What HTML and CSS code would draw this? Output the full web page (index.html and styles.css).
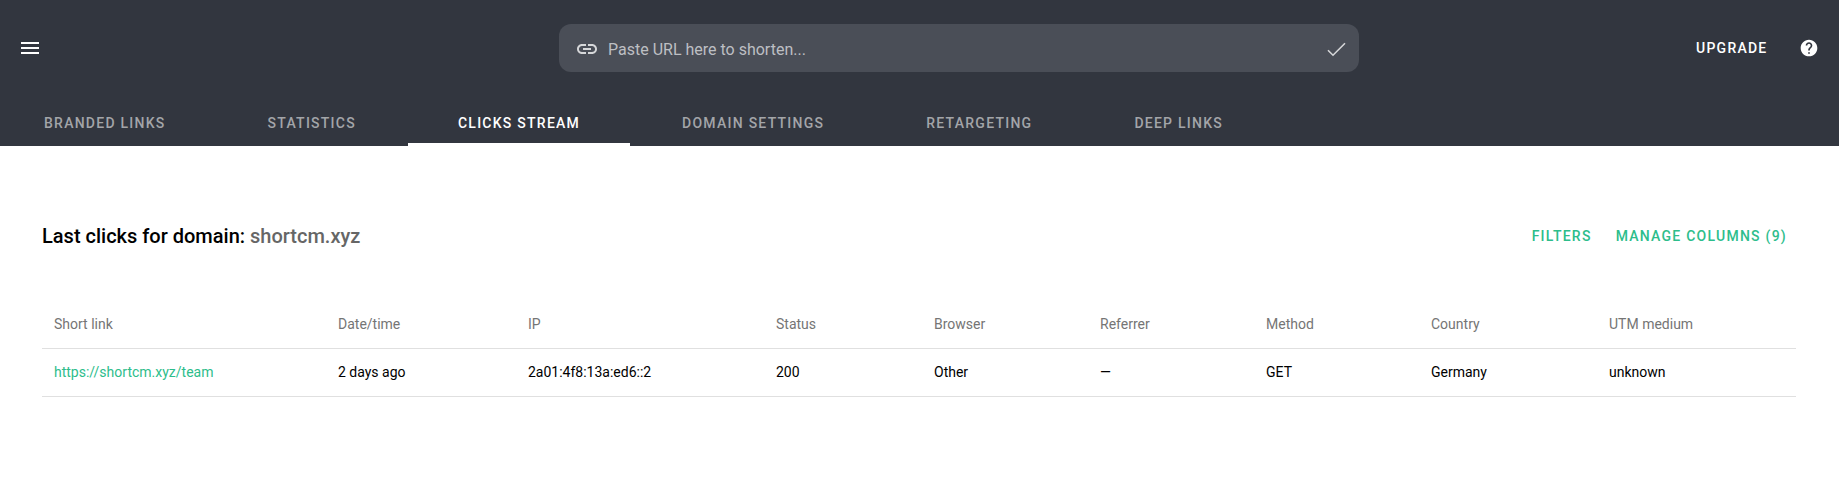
FILE: index.html
```html
<!DOCTYPE html>
<html lang="en">
<head>
<meta charset="utf-8">
<title>Clicks stream</title>
<link rel="stylesheet" href="styles.css">
</head>
<body>
<header class="topbar">
  <div class="toprow">
    <button class="menu-btn" aria-label="Menu">
      <svg class="icon" viewBox="0 0 24 24"><path d="M3 18h18v-2H3v2zm0-5h18v-2H3v2zm0-7v2h18V6H3z"/></svg>
    </button>
    <div class="shorten">
      <svg class="icon link-icon" viewBox="0 0 24 24"><path d="M3.9 12c0-1.71 1.39-3.1 3.1-3.1h4V7H7c-2.76 0-5 2.24-5 5s2.24 5 5 5h4v-1.9H7c-1.71 0-3.1-1.39-3.1-3.1zM8 13h8v-2H8v2zm9-6h-4v1.9h4c1.71 0 3.1 1.39 3.1 3.1s-1.39 3.1-3.1 3.1h-4V17h4c2.76 0 5-2.24 5-5s-2.24-5-5-5z"/></svg>
      <span class="placeholder">Paste URL here to shorten...</span>
      <svg class="icon check-icon" viewBox="0 0 24 24"><path d="M4 13.2l5 5L21 6.2"/></svg>
    </div>
    <div class="top-actions">
      <a class="upgrade">UPGRADE</a>
      <svg class="help-icon" viewBox="0 0 24 24"><path d="M12 2C6.48 2 2 6.48 2 12s4.48 10 10 10 10-4.48 10-10S17.52 2 12 2zm1 17h-2v-2h2v2zm2.07-7.75l-.9.92C13.45 12.9 13 13.5 13 15h-2v-.5c0-1.1.45-2.1 1.17-2.83l1.24-1.26c.37-.36.59-.86.59-1.41 0-1.1-.9-2-2-2s-2 .9-2 2H8c0-2.21 1.79-4 4-4s4 1.79 4 4c0 .88-.36 1.68-.93 2.25z"/></svg>
    </div>
  </div>
  <nav class="tabs">
    <a class="tab">BRANDED LINKS</a>
    <a class="tab">STATISTICS</a>
    <a class="tab active">CLICKS STREAM</a>
    <a class="tab">DOMAIN SETTINGS</a>
    <a class="tab">RETARGETING</a>
    <a class="tab">DEEP LINKS</a>
  </nav>
</header>
<main class="content">
  <div class="title-row">
    <h1 class="title">Last clicks for domain: <span class="domain">shortcm.xyz</span></h1>
    <div class="title-actions">
      <a class="action">FILTERS</a>
      <a class="action">MANAGE COLUMNS (9)</a>
    </div>
  </div>
  <table class="clicks">
    <thead>
      <tr>
        <th class="c1">Short link</th>
        <th class="c2">Date/time</th>
        <th class="c3">IP</th>
        <th class="c4">Status</th>
        <th class="c5">Browser</th>
        <th class="c6">Referrer</th>
        <th class="c7">Method</th>
        <th class="c8">Country</th>
        <th class="c9">UTM medium</th>
      </tr>
    </thead>
    <tbody>
      <tr>
        <td><a class="short-link">https://shortcm.xyz/team</a></td>
        <td>2 days ago</td>
        <td>2a01:4f8:13a:ed6::2</td>
        <td>200</td>
        <td>Other</td>
        <td>—</td>
        <td>GET</td>
        <td>Germany</td>
        <td>unknown</td>
      </tr>
    </tbody>
  </table>
</main>
</body>
</html>
```
FILE: styles.css
```css
* { box-sizing: border-box; }
html, body { margin: 0; padding: 0; background: #fff; }
body { font-family: Roboto, "Liberation Sans", sans-serif; color: #000; height: 496px; overflow: hidden; }

.topbar { background: #32363f; height: 146px; display: flex; flex-direction: column; }
.toprow { display: flex; align-items: flex-start; height: 96px; padding-top: 24px; position: relative; }
.menu-btn { width: 24px; height: 24px; margin: 12px 0 0 18px; padding: 0; background: none; border: 0; }
.icon { width: 24px; height: 24px; display: block; fill: #fff; }
.shorten { width: 800px; height: 48px; margin-left: 517px; background: #4a4e57; border-radius: 12px; display: flex; align-items: center; padding: 2px 11px 0 16px; }
.link-icon { fill: #d6d7d9; }
.placeholder { flex: 1; margin-left: 9px; font-size: 16px; color: #bdbfc3; }
.check-icon { fill: none; stroke: #d6d7d9; stroke-width: 1.6; }
.top-actions { display: flex; align-items: center; margin-left: 337px; height: 48px; }
.upgrade { font-size: 14px; font-weight: 500; letter-spacing: 1.25px; color: #fff; }
.help-icon { width: 20px; height: 20px; margin-left: 31px; fill: #fff; }

.tabs { display: flex; height: 50px; margin-left: -6px; gap: 2px; }
.tab { display: flex; align-items: flex-start; padding: 19px 50px 0; height: 50px; font-size: 14px; font-weight: 500; letter-spacing: 1.25px; color: #a3a5a9; }
.tab.active { color: #fff; border-bottom: 3px solid #fff; }

.content { padding: 0 43px 0 42px; }
.title-row { display: flex; justify-content: space-between; align-items: center; height: 60px; margin-top: 60px; }
.title { margin: 0; font-size: 20px; font-weight: 500; line-height: 60px; }
.domain { color: #666; }
.title-actions { display: flex; gap: 24px; padding-right: 9px; }
.action { font-size: 14px; font-weight: 500; letter-spacing: 1.25px; color: #2dbd8b; }

.clicks { width: 100%; margin-top: 34px; border-collapse: collapse; table-layout: fixed; }
.clicks th, .clicks td { padding: 0 12px; text-align: left; border-bottom: 1px solid #e0e0e0; white-space: nowrap; font-size: 14px; }
.clicks th { height: 48px; font-weight: 400; color: #757575; }
.clicks td { height: 48px; color: #000; }
.c1 { width: 284px; }
.c2 { width: 190px; }
.c3 { width: 248px; }
.c4 { width: 158px; }
.c5 { width: 166px; }
.c6 { width: 166px; }
.c7 { width: 165px; }
.c8 { width: 178px; }
.short-link { color: #2dbd8b; }
```
